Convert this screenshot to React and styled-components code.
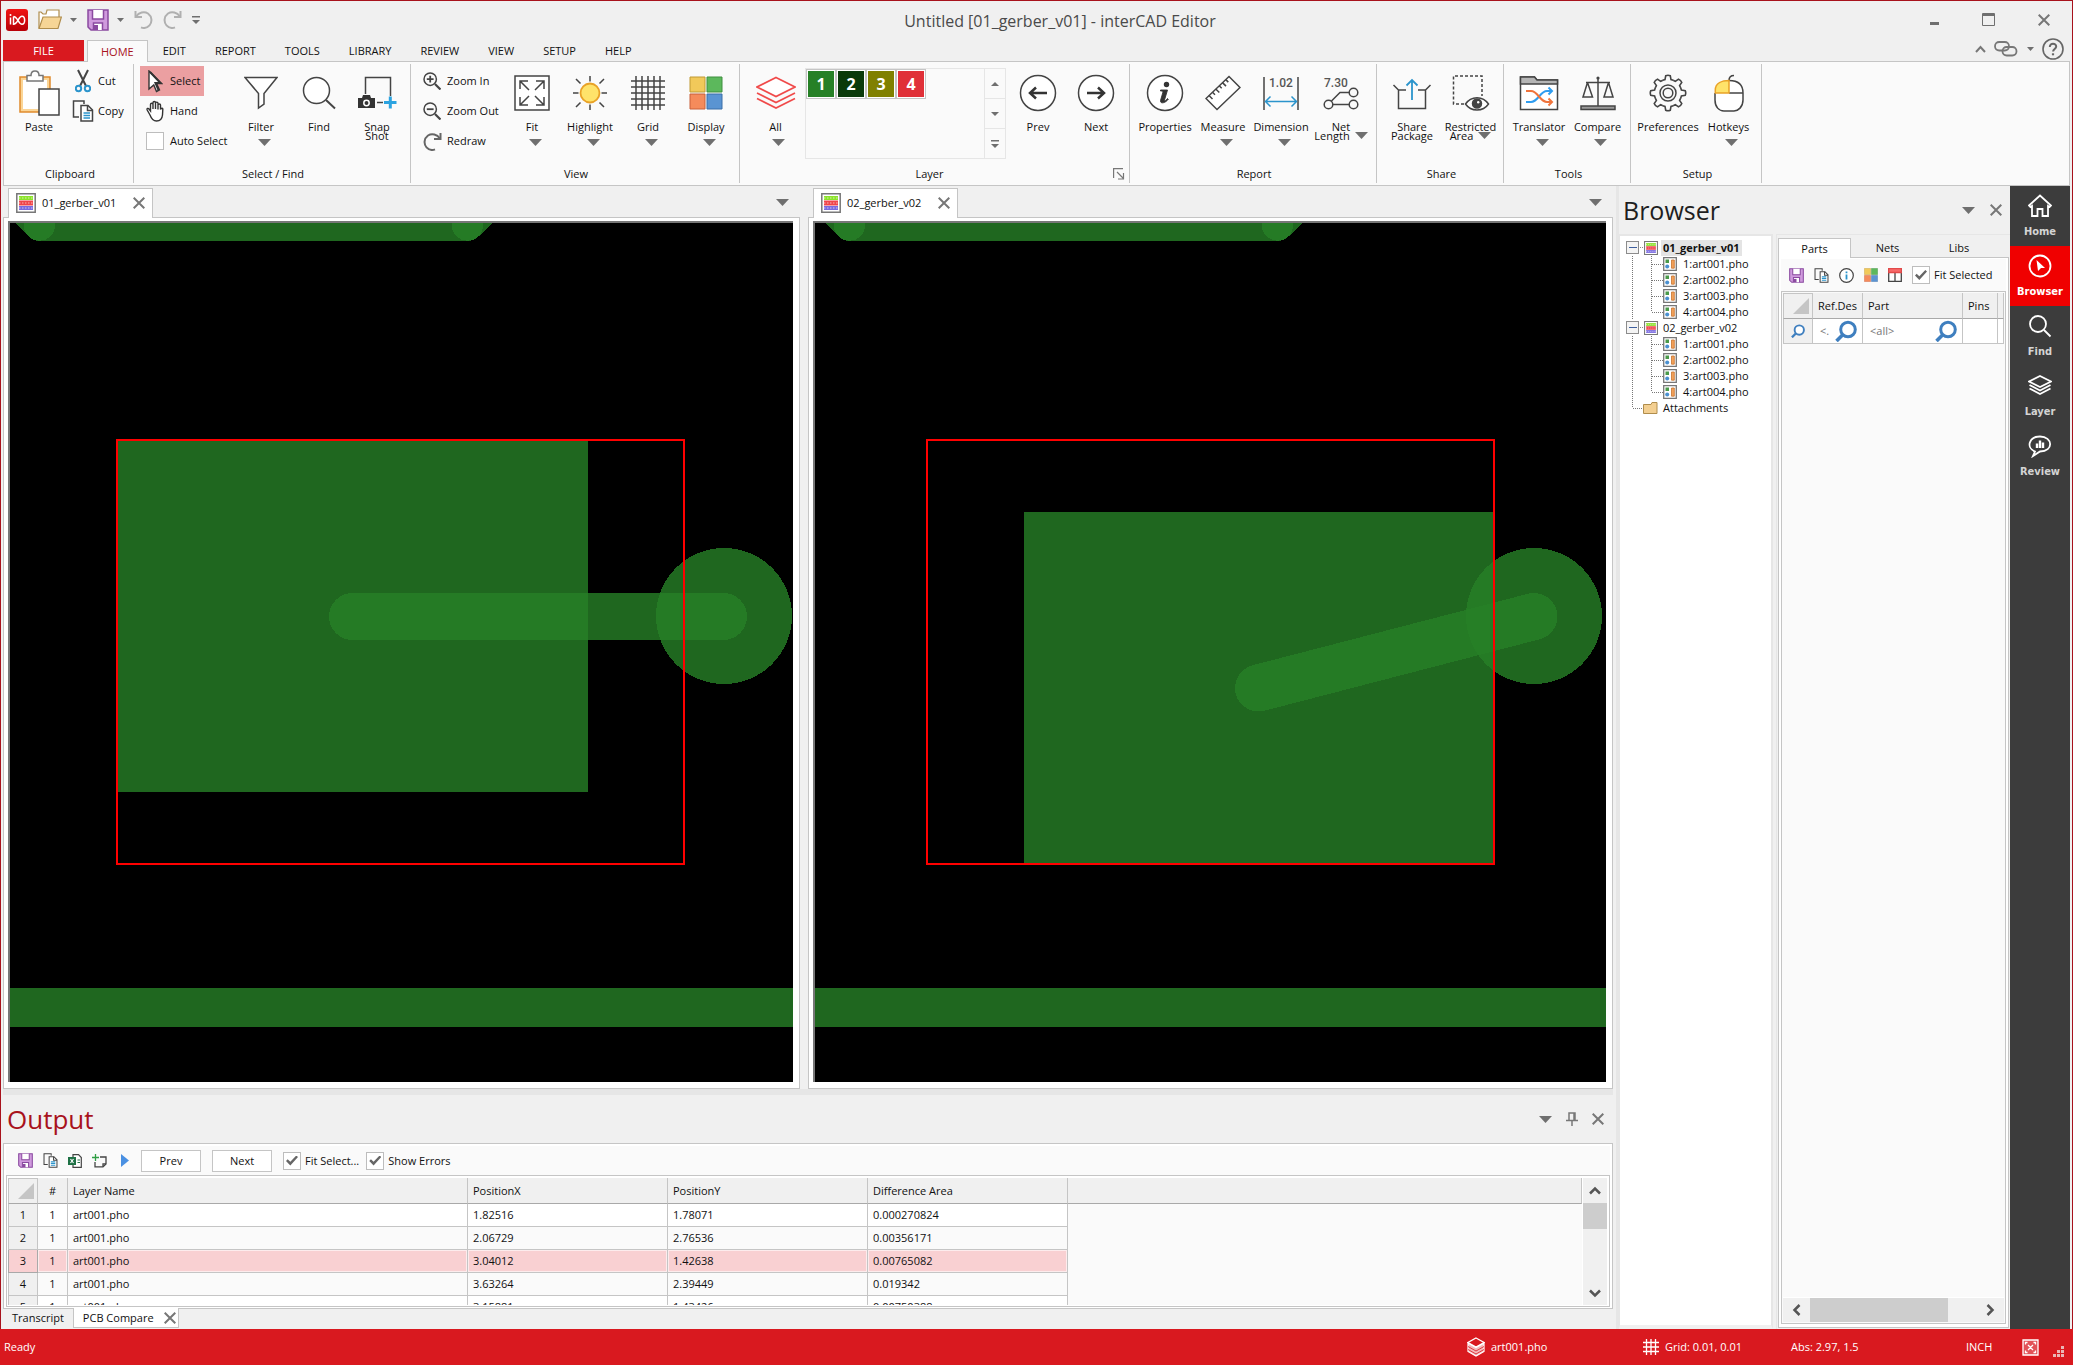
import React, { useState } from 'react';
import styled, { createGlobalStyle, css } from 'styled-components';

const GlobalStyle = createGlobalStyle`
  * {
    box-sizing: border-box;
  }
  html, body, #root {
    height: 100%;
    margin: 0;
  }
  body {
    overflow: hidden;
  }
  body, button, input, table {
    font-family: 'Open Sans', 'Noto Sans', sans-serif;
    font-size: 11px;
    line-height: 16px;
    color: #111;
  }
  button {
    padding: 0;
    border: 0;
    background: none;
    cursor: default;
  }
  svg {
    display: block;
    flex: none;
  }
`;

const line = '#c5c5c5';
const softLine = '#e6e6e6';
const ink = '#444';
const grey = '#777';
const red = '#d9191f';
const darkRed = '#a8121c';

const Window = styled.div`
  display: flex;
  flex-direction: column;
  height: 100vh;
  background: #f0f0f0;
  border-top: 1px solid ${darkRed};
`;

const Frame = styled.div`
  flex: 1;
  min-height: 0;
  display: flex;
  flex-direction: column;
  padding: 0 2px;
  border: solid ${darkRed};
  border-width: 0 1px;
`;

/* ---------- icons ---------- */

const Icon = ({ w = 16, h = w, children, ...rest }) => (
  <svg width={w} height={h} viewBox={`0 0 ${w} ${h}`} fill="none" stroke={ink} strokeWidth="1.5" aria-hidden="true" {...rest}>
    {children}
  </svg>
);

const Arrow = ({ w = 13, h = 7 }) => (
  <Icon w={w} h={h} stroke="none">
    <path d={`M0 0H${w}L${w / 2} ${h}Z`} fill="#6f6f6f" />
  </Icon>
);

const Cross = ({ size = 11, color = grey }) => (
  <Icon w={size} stroke={color} strokeWidth="2">
    <path d={`M.7 .7L${size - 0.7} ${size - 0.7}M${size - 0.7} .7L.7 ${size - 0.7}`} />
  </Icon>
);

const LogoIcon = () => (
  <Icon w={22} stroke="#fff" strokeWidth="1.5">
    <defs>
      <linearGradient id="logo" x1="0" y1="0" x2="0" y2="1">
        <stop offset="0" stopColor="#f01414" />
        <stop offset="1" stopColor="#b80008" />
      </linearGradient>
    </defs>
    <rect width="22" height="22" rx="3" fill="url(#logo)" stroke="none" />
    <path d="M4.500 8.500V15.500" />
    <path d="M7.500 7.500V15.300C11.500 15.300 12.500 7.300 16 7.300C19.500 7.300 19.500 15.300 16 15.300C12.500 15.300 11.500 7.500 7.500 7.500" />
    <circle cx="4.500" cy="6" r="1" fill="#fff" stroke="none" />
  </Icon>
);

const FolderIcon = () => (
  <Icon w={24} h={21} stroke="#b08d4c" strokeWidth="1.2">
    <path d="M1 19V3H3L5 5H8L9 1H21V8" fill="#fff" />
    <path d="M1 19.5L5 8H23.4L20 19.5Z" fill="#f6d596" />
  </Icon>
);

const SaveIcon = ({ size = 22 }) => (
  <svg width={size} height={size} viewBox="0 0 22 22" fill="none" stroke="#8a4aa0" strokeWidth="1.5" aria-hidden="true">
    <path d="M1 1H21V21H4L1 18Z" fill="#cf9add" />
    <path d="M5.5 1V10H16.5V1M6.5 21V14H15.5V21" fill="#fff" />
    <path d="M7 16H11V21H7Z" fill="#8a4aa0" stroke="none" />
  </svg>
);

const UndoIcon = ({ flip, color = '#b0b0b0' }) => (
  <Icon w={19} stroke={color} strokeWidth="2">
    <g transform={flip ? 'matrix(-1 0 0 1 19 0)' : undefined}>
      <path d="M1.5 1V7H8" />
      <path d="M2 6.5C5 2.5 10 1 14 3.5C18 6.5 18.5 12 15.5 15.3C13 18 9.500 18.400 7 17.300" />
    </g>
  </Icon>
);

const CustomizeIcon = () => (
  <Icon w={8} h={8} stroke="none" fill="#6f6f6f">
    <path d="M0 0H8V1.400H0ZM0 4H8L4 8Z" />
  </Icon>
);

const PasteIcon = () => (
  <Icon w={42} h={46}>
    <path d="M2 7H32V42H2Z" fill="#fbd596" stroke="#e08a2c" />
    <path d="M5 10H29V39H5Z" fill="#fff" stroke="none" />
    <path d="M9 11V5.500H13C13 -.5 21 -.5 21 5.500H25V11Z" fill="#fff" stroke="#777" />
    <path d="M21 19H41V45H21Z" fill="#fff" />
  </Icon>
);

const CutIcon = () => (
  <Icon w={16} h={24}>
    <path d="M3 1L11 17M13 1L5 17" strokeWidth="2" />
    <circle cx="3.500" cy="19.500" r="2.700" stroke="#2b94cc" strokeWidth="2" />
    <circle cx="12.500" cy="19.500" r="2.700" stroke="#2b94cc" strokeWidth="2" />
  </Icon>
);

const CopyIcon = ({ size = 22 }) => (
  <svg width={size} height={size} viewBox="0 0 22 22" fill="none" stroke={ink} strokeWidth="1.5" aria-hidden="true">
    <path d="M7 17H1.500V1H12V4" />
    <path d="M9 5.500H16L20.500 10V21H9Z" fill="#fff" />
    <path d="M15.500 5.500V10.500H20.500" />
    <path d="M11.500 13H18M11.500 15.500H18M11.500 18H18" stroke="#2b94cc" />
  </svg>
);

const CursorIcon = () => (
  <Icon w={16} h={23} strokeWidth="1.400" stroke="#333">
    <path d="M2 1L14.500 13.500H9.500L12.500 20L9.500 21.500L6.800 15L2 19Z" fill="#fff" />
    <path d="M3 2L13.500 13H8.500L11.500 20" strokeWidth="2" />
  </Icon>
);

const HandIcon = () => (
  <Icon w={18} h={22} strokeWidth="1.400" stroke="#333">
    <path d="M4 15L1.200 10C.6 8.500 2.200 7.800 3 9L4.500 11V4.500C4.500 2.800 7 2.800 7 4.500V9V2.700C7 1 9.500 1 9.500 2.700V9V3.300C9.500 1.700 12 1.700 12 3.300V9.500V5C12.200 3.700 14.500 3.700 14.500 5V9.500C15.500 7.500 17 8 16.800 9.500L16.500 15C16 20 13 21 10.500 21C7 21 5.500 19 4 15Z" fill="#fff" />
  </Icon>
);

const FilterIcon = () => (
  <Icon w={34} h={34}>
    <path d="M1 1.500H33L20 17.500V28L14.500 32V17.500Z" fill="#fff" />
  </Icon>
);

const FindIcon = () => (
  <Icon w={34} h={34}>
    <circle cx="14.500" cy="14.500" r="13" fill="#fff" />
    <path d="M24 24L33 32.500" strokeWidth="2" />
  </Icon>
);

const SnapIcon = () => (
  <Icon w={40} h={34}>
    <path d="M8.500 18V1.500H33.500V20" />
    <path d="M1 22H5L6 19H13L14 22H18V32H1Z" fill="#333" stroke="none" />
    <circle cx="9.500" cy="27" r="2.700" fill="#333" stroke="#fff" />
    <path d="M20 26.500H26" />
    <path d="M27 26.500H39.500M33.300 20.500V32.500" stroke="#2ba3e0" strokeWidth="3" />
  </Icon>
);

const ZoomIcon = ({ plus }) => (
  <Icon w={18}>
    <circle cx="7.200" cy="7.200" r="6.200" />
    <path d="M12 12L17.500 17.500" strokeWidth="2.200" />
    <path d={plus ? 'M3.800 7.200H10.600M7.200 3.800V10.600' : 'M3.800 7.200H10.600'} strokeWidth="1.800" />
  </Icon>
);

const FitIcon = () => (
  <Icon w={36}>
    <path d="M1 1H35V35H1Z" fill="#fff" />
    <path d="M6 14V6H14M6 6L15 15M30 14V6H22M30 6L21 15M6 22V30H14M6 30L15 21M30 22V30H22M30 30L21 21" />
  </Icon>
);

const SunIcon = () => (
  <Icon w={36}>
    <path d="M18 1V6.500M18 29.500V35M1 18H6.500M29.500 18H35M4 4L8.500 8.500M27.500 27.500L32 32M32 4L27.500 8.500M8.500 27.500L4 32" />
    <circle cx="18" cy="18" r="9.500" fill="#ffe36a" stroke="#e9a227" strokeWidth="1.800" />
  </Icon>
);

const GridIcon = () => (
  <Icon w={36}>
    <path d="M6 1V35M12 1V35M18 1V35M24 1V35M30 1V35M1 6H35M1 12H35M1 18H35M1 24H35M1 30H35" />
  </Icon>
);

const TilesIcon = ({ size = 34 }) => (
  <svg width={size} height={size} viewBox="0 0 34 34" strokeWidth="1" aria-hidden="true">
    <path d="M1 1H16V16H1Z" fill="#f1c95a" stroke="#c09a35" />
    <path d="M18 1H33V16H18Z" fill="#5cb85c" stroke="#3f8f3f" />
    <path d="M1 18H16V33H1Z" fill="#f58b5b" stroke="#c8603a" />
    <path d="M18 18H33V33H18Z" fill="#5a94d2" stroke="#3a6fa8" />
  </svg>
);

const LayersRedIcon = () => (
  <Icon w={40} h={34} stroke="#f04a4a" strokeWidth="1.700">
    <path d="M20 1.500L39 11L20 20.500L1 11Z" fill="#fff" />
    <path d="M1 17L20 26.500L39 17M1 22.500L20 32L39 22.500" />
  </Icon>
);

const RoundArrowIcon = ({ flip }) => (
  <Icon w={38}>
    <circle cx="19" cy="19" r="17.500" fill="#fff" />
    <path d={flip ? 'M10 19H27M21 13.500L27 19L21 24.500' : 'M28 19H11M17 13.500L11 19L17 24.500'} strokeWidth="2.500" stroke="#333" />
  </Icon>
);

const InfoBigIcon = () => (
  <Icon w={38}>
    <circle cx="19" cy="19" r="17.500" fill="#fff" />
    <circle cx="20.500" cy="10.500" r="2.700" fill="#333" stroke="none" />
    <path d="M14.500 16H21.500L18.500 26C18.300 27.500 19.500 27 21.500 24.500L22.300 25.300C19 29.500 14 30 14.500 26.500L17 18C17 17 16 17 14.500 17Z" fill="#333" stroke="#333" strokeWidth=".9" />
  </Icon>
);

const RulerIcon = () => (
  <Icon w={36}>
    <path d="M24 1.500L35 12.500L12 34.500L1 23.500Z" fill="#fff" />
    <path d="M4 20.500L7.500 24M7.500 17.200L10 19.700M10.800 14L14.300 17.500M14.200 10.800L16.700 13.300M17.500 7.600L21 11.100M20.800 4.600L23.300 7.100" />
  </Icon>
);

const IconText = styled.text`
  font: 500 12px Roboto, 'Open Sans', sans-serif;
  fill: #555;
  stroke: none;
`;

const DimensionIcon = () => (
  <Icon w={36}>
    <path d="M1 2V35M35 2V35" />
    <IconText x="6" y="12">1.02</IconText>
    <path d="M2.500 26.500H33.500M7.500 21.500L2.500 26.500L7.500 31.500M28.500 21.500L33.500 26.500L28.500 31.500" stroke="#2b94cc" />
  </Icon>
);

const NetIcon = () => (
  <Icon w={38} h={36}>
    <IconText x="2" y="12">7.30</IconText>
    <circle cx="6.500" cy="29.500" r="4.300" />
    <circle cx="31.500" cy="29.500" r="4.300" />
    <circle cx="31.500" cy="17.500" r="4.300" />
    <path d="M11 29.500H27M9.500 26L18 17.500H27" />
  </Icon>
);

const ShareIcon = () => (
  <Icon w={40} h={36}>
    <path d="M1.500 10L6.500 15H14M38.500 10L33.500 15H26M6.500 15V33.500H33.500V15" />
    <path d="M20 25V5M14.500 10.500L20 5L25.500 10.500" stroke="#2b94cc" strokeWidth="1.800" />
  </Icon>
);

const RestrictedIcon = () => (
  <Icon w={38} h={38}>
    <path d="M12 30H1.500V2H30V22" strokeDasharray="3 2" />
    <path d="M13.500 30C19 21.500 31 21.500 36.500 30C31 38 19 38 13.500 30Z" fill="#fff" />
    <circle cx="25" cy="29.500" r="4.500" fill="#444" />
    <circle cx="26.200" cy="28.200" r="1.200" fill="#fff" stroke="none" />
  </Icon>
);

const TranslatorIcon = () => (
  <Icon w={40} h={36}>
    <path d="M1.500 34.500V2H15.500L18 5H38.500V34.500Z" fill="#fff" />
    <path d="M1.500 2H15.500L18 5H38.500V9H1.500Z" fill="#b5b5b5" />
    <path d="M7 27H12C19 27 21 16 28 16H33M29.500 12.500L33 16L29.500 19.500" stroke="#2f9df0" strokeWidth="2" />
    <path d="M7 16H12C19 16 21 27 28 27H33M29.500 23.500L33 27L29.500 30.500" stroke="#f0743c" strokeWidth="2" />
  </Icon>
);

const ScaleIcon = () => (
  <Icon w={36}>
    <path d="M1 31H35V34.500H1Z" fill="#999" />
    <path d="M18 4V31M6 7.500H30" />
    <circle cx="18" cy="3" r="1.600" fill={ink} stroke="none" />
    <path d="M7.500 7.500L3 22H12.500L7.500 7.500M28.500 7.500L24 22H33L28.500 7.500" />
  </Icon>
);

const teeth = Array.from({ length: 8 }, (_, i) => i * 45);

const GearIcon = () => (
  <Icon w={38}>
    <g strokeWidth="1.600">
      {teeth.map((deg) => (
        <path key={deg} transform={`rotate(${deg} 19 19)`} d="M13.700 6.300L16 5.600L16.700 1.800C18 1.200 20 1.200 21.300 1.800L22 5.600L24.300 6.300" />
      ))}
    </g>
    <circle cx="19" cy="19" r="8" />
    <circle cx="19" cy="19" r="4.800" />
  </Icon>
);

const MouseIcon = () => (
  <Icon w={30} h={38}>
    <path d="M15 6.500C22 6.500 29 9 29 19V26C29 33 24 37 20 37H10C5 37 1 33 1 26V19" fill="#fff" />
    <path d="M15 19H29M15 6.500C15 3 17 1.500 20 1.500" />
    <path d="M1.300 19V16C1.300 9 8 6.500 15 6.500V19Z" fill="#ffe36a" stroke="#e9a227" />
  </Icon>
);

const LinkIcon = () => (
  <Icon w={24} h={16} stroke={grey} strokeWidth="1.800">
    <rect x="1" y="1" width="14" height="8.500" rx="4.200" />
    <rect x="8.500" y="6" width="14" height="8.500" rx="4.200" />
  </Icon>
);

const HelpIcon = () => (
  <Icon w={22} stroke="#666" strokeWidth="1.600">
    <circle cx="11" cy="11" r="10" />
    <path d="M7.800 9C7.800 4.500 14.300 5 14.200 8.700C14 11 11.100 11 11.100 13.500" strokeWidth="2" />
    <path d="M11 15.300V17.300" strokeWidth="2.200" />
  </Icon>
);

const BoardIcon = ({ size = 20 }) => (
  <svg width={size} height={size} viewBox="0 0 20 20" aria-hidden="true">
    <path d="M.8 .8H19.200V19.200H.8Z" fill="#fff" stroke="#777" strokeWidth="1.500" />
    <path d="M3 3H17V7H3Z" fill="#8be32a" />
    <path d="M3 7.500H17V12.500H3Z" fill="#f0454b" />
    <path d="M3 13H17V17H3Z" fill="#7a6ae0" />
    <path d="M3 5H17M3 10H17M3 15H17" stroke="#fff" strokeOpacity=".6" strokeWidth="1.200" strokeDasharray="1.500 1.500" />
  </svg>
);

const ArtIcon = () => (
  <Icon w={14} strokeWidth="1.300" stroke="#777">
    <path d="M.7 .7H13.300V13.300H.7Z" fill="#fff" />
    <path d="M2.500 2.500H6V6H2.500Z" fill="#4a9a4a" stroke="none" />
    <circle cx="4.200" cy="9.500" r="2" fill="#4a90d0" stroke="none" />
    <path d="M8.500 3H11.300V11.200H8.500Z" fill="#f2a15a" stroke="#c8742e" strokeWidth=".8" />
  </Icon>
);

const SmallFolderIcon = () => (
  <Icon w={15} h={12} stroke="#b08d4c" strokeWidth="1">
    <path d="M.5 11.500V2.500H8L9 .5H14V11.500Z" fill="#f3cf91" />
  </Icon>
);

const ExcelIcon = () => (
  <Icon w={14} strokeWidth="1.200">
    <path d="M5 3V.7H10.500L13.300 3.500V13.300H5V11" fill="#fff" />
    <path d="M0 3H8V11H0Z" fill="#1e7145" stroke="none" />
    <path d="M2.500 5L5.500 9M5.500 5L2.500 9" stroke="#fff" />
    <path d="M9.500 6H12M9.500 8.500H12" stroke="#1e7145" />
  </Icon>
);

const AddNoteIcon = () => (
  <Icon w={15} h={14} strokeWidth="1.300">
    <path d="M8 3H14V10L11 12.800H3V8" />
    <path d="M11 12.500V9.800H14" />
    <path d="M0 3.500H7M3.500 0V7" stroke="#2f9e44" />
  </Icon>
);

const PlayIcon = () => (
  <Icon w={14} h={13} stroke="none">
    <path d="M4 0L12 6.500L4 13Z" fill="#4a90e2" />
  </Icon>
);

const InfoIcon = () => (
  <Icon w={15} strokeWidth="1.200">
    <circle cx="7.500" cy="7.500" r="6.800" fill="#fff" />
    <path d="M7.500 6.500V11.500M7.500 3.500V5.200" stroke="#2b94cc" strokeWidth="1.800" />
  </Icon>
);

const TableIcon = () => (
  <Icon w={14} strokeWidth="1.300">
    <path d="M.7 1H13.300V13.300H.7ZM7 5V13.300" fill="#fff" />
    <path d="M.7 .7H13.300V4.500H.7Z" fill="#f86b6b" stroke="#e24a4a" />
  </Icon>
);

const SearchBlueIcon = ({ size = 22 }) => (
  <svg width={size} height={size} viewBox="0 0 22 22" fill="none" stroke="#3f7fbf" strokeWidth="3" aria-hidden="true">
    <circle cx="13" cy="9.500" r="7.300" fill="#fff" />
    <path d="M7.500 15L1.500 21" strokeWidth="3.600" />
  </svg>
);

const PinIcon = () => (
  <Icon w={12} h={14} stroke={grey}>
    <path d="M3 8V1H9V8M0 8.500H12M6 9V14M8 1V8" />
  </Icon>
);

const Chevron = ({ dir }) => (
  <Icon w={12} stroke="#555" strokeWidth="2.500">
    <path transform={`rotate(${dir} 6 6)`} d="M1 8.500L6 3.500L11 8.500" />
  </Icon>
);

const Corner = () => (
  <Icon w={16} stroke="none">
    <path d="M16 0V16H0Z" fill={line} />
  </Icon>
);

/* ---------- title bar and tabs ---------- */

const TitleBar = styled.header`
  display: flex;
  align-items: center;
  height: 39px;
  padding: 0 20px 2px 3px;
  flex: none;
`;

const QuickBar = styled.div`
  display: flex;
  align-items: center;
  gap: 10px;
`;

const IconButton = styled.button`
  display: flex;
  align-items: center;
  gap: ${({ $gap }) => $gap || 0}px;
`;

const WindowTitle = styled.h1`
  flex: 1;
  margin: 0;
  padding: 2px 10px 0 0;
  text-align: center;
  font-size: 16px;
  line-height: 24px;
  font-weight: 400;
  color: #4a4a4a;
`;

const WindowButtons = styled.div`
  display: flex;
  align-items: center;
  gap: 43px;
`;

const MenuBar = styled.nav`
  display: flex;
  align-items: flex-end;
  height: 21px;
  flex: none;
`;

const FileButton = styled.button`
  width: 81px;
  height: 21px;
  color: #fff;
  background: ${red};
`;

const MenuTab = styled.button`
  height: 21px;
  padding: 0 13px 0 14px;
  border: 1px solid transparent;
  border-bottom: 0;
  ${({ $active }) =>
    $active &&
    css`
      height: 22px;
      margin: 0 0 -1px 3px;
      padding: 0 13px;
      z-index: 1;
      color: ${darkRed};
      background: #fafafa;
      border-color: ${line};
    `}
`;

const MenuRight = styled.div`
  display: flex;
  align-items: center;
  height: 24px;
  gap: 8px;
  margin-left: auto;
  padding-right: 6px;
`;

/* ---------- ribbon ---------- */

const Ribbon = styled.section`
  display: flex;
  flex: none;
  height: 125px;
  padding: 2px 0;
  background: #fafafa;
  border: 1px solid ${line};
`;

const Group = styled.div`
  display: flex;
  flex-direction: column;
  padding: 2px ${({ $right = 3 }) => $right}px 0 6px;
  border-right: 1px solid ${line};
`;

const GroupBody = styled.div`
  flex: 1;
  display: flex;
  align-items: flex-start;
`;

const GroupLabel = styled.div`
  display: flex;
  align-items: center;
  height: 18px;
  span {
    flex: 1;
    text-align: center;
  }
`;

const SmallColumn = styled.div`
  display: flex;
  flex-direction: column;
  align-items: flex-start;
  width: ${({ $width }) => $width}px;
`;

const smallItem = css`
  display: flex;
  align-items: center;
  height: 30px;
  gap: 3px;
  padding: 0 4px 0 3px;
  white-space: nowrap;
`;

const SmallButton = styled.button`
  ${smallItem}
  background: ${({ $active }) => ($active ? '#eb9fa1' : 'none')};
`;

const SmallCheck = styled.label`
  ${smallItem}
`;

const SmallIconBox = styled.span`
  display: flex;
  align-items: center;
  justify-content: center;
  width: 24px;
`;

const BigButton = styled.button`
  display: flex;
  flex-direction: column;
  align-items: center;
  width: ${({ $width = 58 }) => $width}px;
  padding-top: 3px;
`;

const BigIconBox = styled.span`
  display: flex;
  align-items: center;
  justify-content: center;
  height: 48px;
  margin-bottom: 5px;
`;

const BigLabel = styled.span`
  display: flex;
  align-items: center;
  gap: 5px;
  line-height: 9px;
  white-space: nowrap;
`;

const BigArrow = styled.span`
  padding: 8px 0 0 6px;
`;

const Gallery = styled.div`
  display: flex;
  width: 201px;
  height: 91px;
  margin: 2px 3px 0 0;
  border: 1px solid ${softLine};
`;

const Swatches = styled.div`
  display: flex;
  align-items: flex-start;
  flex: 1;
`;

const Swatch = styled.button`
  width: 30px;
  height: 30px;
  border: 1px solid ${line};
  box-shadow: inset 0 0 0 1px #fff;
  background: ${({ $color }) => $color};
  color: #fff;
  font-size: 16px;
  font-weight: 700;
`;

const GalleryScroll = styled.div`
  display: flex;
  flex-direction: column;
  width: 21px;
  border-left: 1px solid ${softLine};
  button {
    flex: 1;
    display: flex;
    align-items: center;
    justify-content: center;
  }
  button + button {
    border-top: 1px solid ${softLine};
  }
`;

const Checkbox = styled.input.attrs({ type: 'checkbox' })`
  appearance: none;
  display: grid;
  place-items: center;
  width: 18px;
  height: 18px;
  margin: 0;
  background: #fff;
  border: 1px solid #bdbdbd;
  &:checked::after {
    content: '';
    width: 12px;
    height: 10px;
    background: #666;
    clip-path: polygon(0 55%, 14% 38%, 36% 62%, 86% 0, 100% 16%, 36% 100%);
  }
`;

const Big = ({ icon, label, second, arrow, width }) => (
  <BigButton $width={width}>
    <BigIconBox>{icon}</BigIconBox>
    <BigLabel>{label}</BigLabel>
    {second && (
      <BigLabel>
        {second}
        {arrow && <Arrow />}
      </BigLabel>
    )}
    {arrow && !second && (
      <BigArrow>
        <Arrow />
      </BigArrow>
    )}
  </BigButton>
);

const Small = ({ icon, label, active }) => (
  <SmallButton $active={active}>
    <SmallIconBox>{icon}</SmallIconBox>
    {label}
  </SmallButton>
);

const layers = [
  { id: 1, color: '#268026' },
  { id: 2, color: '#0a3a0a' },
  { id: 3, color: '#808000' },
  { id: 4, color: '#e03038' },
];

const LayerGallery = () => (
  <Gallery>
    <Swatches>
      {layers.map(({ id, color }) => (
        <Swatch key={id} $color={color}>
          {id}
        </Swatch>
      ))}
    </Swatches>
    <GalleryScroll>
      <button aria-label="Scroll up">
        <Icon w={8} h={4} stroke="none">
          <path d="M0 4H8L4 0Z" fill="#6f6f6f" />
        </Icon>
      </button>
      <button aria-label="Scroll down">
        <Arrow w={8} h={4} />
      </button>
      <button aria-label="More layers">
        <CustomizeIcon />
      </button>
    </GalleryScroll>
  </Gallery>
);

const RibbonBar = () => (
  <Ribbon>
    <Group>
      <GroupBody>
        <Big icon={<PasteIcon />} label="Paste" />
        <SmallColumn $width={62}>
          <Small icon={<CutIcon />} label="Cut" />
          <Small icon={<CopyIcon />} label="Copy" />
        </SmallColumn>
      </GroupBody>
      <GroupLabel>
        <span>Clipboard</span>
      </GroupLabel>
    </Group>
    <Group $right={4}>
      <GroupBody>
        <SmallColumn $width={92}>
          <Small icon={<CursorIcon />} label="Select" active />
          <Small icon={<HandIcon />} label="Hand" />
          <SmallCheck>
            <SmallIconBox>
              <Checkbox />
            </SmallIconBox>
            Auto Select
          </SmallCheck>
        </SmallColumn>
        <Big icon={<FilterIcon />} label="Filter" arrow />
        <Big icon={<FindIcon />} label="Find" />
        <Big icon={<SnapIcon />} label="Snap" second="Shot" />
      </GroupBody>
      <GroupLabel>
        <span>Select / Find</span>
      </GroupLabel>
    </Group>
    <Group $right={4}>
      <GroupBody>
        <SmallColumn $width={86}>
          <Small icon={<ZoomIcon plus />} label="Zoom In" />
          <Small icon={<ZoomIcon />} label="Zoom Out" />
          <Small icon={<UndoIcon flip color="#666" />} label="Redraw" />
        </SmallColumn>
        <Big icon={<FitIcon />} label="Fit" arrow />
        <Big icon={<SunIcon />} label="Highlight" arrow />
        <Big icon={<GridIcon />} label="Grid" arrow />
        <Big icon={<TilesIcon />} label="Display" arrow />
      </GroupBody>
      <GroupLabel>
        <span>View</span>
      </GroupLabel>
    </Group>
    <Group $right={4}>
      <GroupBody>
        <Big icon={<LayersRedIcon />} label="All" arrow width={59} />
        <LayerGallery />
        <Big icon={<RoundArrowIcon />} label="Prev" />
        <Big icon={<RoundArrowIcon flip />} label="Next" />
      </GroupBody>
      <GroupLabel>
        <span>Layer</span>
        <IconButton aria-label="Layer options">
          <Icon w={12} stroke={grey} strokeWidth="1.200">
            <path d="M.6 10V.6H10M4 4L10.500 10.500M10.500 5V11H5" />
          </Icon>
        </IconButton>
      </GroupLabel>
    </Group>
    <Group $right={4}>
      <GroupBody>
        <Big icon={<InfoBigIcon />} label="Properties" />
        <Big icon={<RulerIcon />} label="Measure" arrow />
        <Big icon={<DimensionIcon />} label="Dimension" arrow />
        <Big icon={<NetIcon />} label="Net" second="Length" arrow width={62} />
      </GroupBody>
      <GroupLabel>
        <span>Report</span>
      </GroupLabel>
    </Group>
    <Group>
      <GroupBody>
        <Big icon={<ShareIcon />} label="Share" second="Package" />
        <Big icon={<RestrictedIcon />} label="Restricted" second="Area" arrow width={59} />
      </GroupBody>
      <GroupLabel>
        <span>Share</span>
      </GroupLabel>
    </Group>
    <Group>
      <GroupBody>
        <Big icon={<TranslatorIcon />} label="Translator" arrow />
        <Big icon={<ScaleIcon />} label="Compare" arrow width={59} />
      </GroupBody>
      <GroupLabel>
        <span>Tools</span>
      </GroupLabel>
    </Group>
    <Group>
      <GroupBody>
        <Big icon={<GearIcon />} label="Preferences" width={62} />
        <Big icon={<MouseIcon />} label="Hotkeys" arrow width={59} />
      </GroupBody>
      <GroupLabel>
        <span>Setup</span>
      </GroupLabel>
    </Group>
  </Ribbon>
);

/* ---------- documents ---------- */

const Main = styled.main`
  flex: 1;
  min-height: 0;
  display: flex;
`;

const LeftColumn = styled.div`
  flex: 1;
  min-width: 0;
  display: flex;
  flex-direction: column;
`;

const Documents = styled.div`
  flex: 1;
  min-height: 0;
  display: flex;
  gap: 8px;
`;

const Document = styled.section`
  flex: ${({ $share }) => $share} 1 0;
  min-width: 0;
  display: flex;
  flex-direction: column;
`;

const DocTabs = styled.div`
  display: flex;
  align-items: center;
  justify-content: space-between;
  height: 31px;
  padding: 2px 11px 0 5px;
`;

const DocTab = styled.div`
  display: flex;
  align-items: center;
  align-self: flex-start;
  gap: 6px;
  height: 30px;
  width: 145px;
  padding: 0 7px 1px;
  background: #fff;
  border: 1px solid ${line};
  border-bottom: 0;
  z-index: 1;
  button {
    margin-left: auto;
  }
`;

const DocFrame = styled.div`
  flex: 1;
  min-height: 0;
  padding: 3px 6px 6px 4px;
  background: #fff;
  border: 1px solid ${line};
`;

const Canvas = styled.div`
  height: 100%;
  overflow: hidden;
  background: #000;
  border: solid #777;
  border-width: 2px 0 0 2px;
`;

const copper = { fill: '#268026', fillOpacity: 0.806, stroke: 'none' };

const Artwork = ({ shift = 0, pad, trace }) => (
  <svg width="100%" height="100%" shapeRendering="crispEdges" fill="none">
    <g transform={`translate(${shift} 0)`}>
      <path {...copper} d="M6 0L18 13A16 16 0 0 0 29.500 18H457.500A16 16 0 0 0 469 13L482 0Z" />
      <circle {...copper} cx="29.500" cy="2" r="15.700" />
      <circle {...copper} cx="457.500" cy="2" r="15.700" />
      <rect {...copper} x={pad.x} y={pad.y} width="471" height="352" />
      <circle {...copper} cx="714" cy="393" r="68" />
      <path d={trace} stroke="#268026" strokeOpacity="0.806" strokeWidth="47" strokeLinecap="round" />
      <rect x="107" y="217" width="567" height="424" stroke="#f00" strokeWidth="2" />
    </g>
    <rect {...copper} x="0" y="765" width="100%" height="39" />
  </svg>
);

const DocumentPane = ({ name, share, ...art }) => (
  <Document $share={share}>
    <DocTabs>
      <DocTab>
        <BoardIcon />
        <span>{name}</span>
        <IconButton aria-label={`Close ${name}`}>
          <Cross size={12} />
        </IconButton>
      </DocTab>
      <IconButton aria-label="Open documents">
        <Arrow />
      </IconButton>
    </DocTabs>
    <DocFrame>
      <Canvas>
        <Artwork {...art} />
      </Canvas>
    </DocFrame>
  </Document>
);

/* ---------- output ---------- */

const Splitter = styled.div`
  height: 6px;
  flex: none;
  background: ${softLine};
`;

const Output = styled.section`
  display: flex;
  flex-direction: column;
  flex: none;
  height: 234px;
`;

const PanelHeader = styled.div`
  display: flex;
  align-items: center;
  gap: ${({ $gap }) => $gap}px;
  flex: none;
  height: 48px;
  padding: 0 ${({ $right }) => $right}px 0 4px;
`;

const PanelTitle = styled.h2`
  flex: 1;
  margin: 0;
  font-size: ${({ $size = 26 }) => $size}px;
  line-height: 36px;
  font-weight: 400;
  color: ${({ $color = '#1e1e1e' }) => $color};
`;

const OutputBody = styled.div`
  flex: 1;
  min-height: 0;
  display: flex;
  flex-direction: column;
  padding: 2px 2px 1px;
  background: #fff;
  border: 1px solid ${line};
`;

const Toolbar = styled.div`
  display: flex;
  align-items: center;
  flex: none;
  height: ${({ $height = 29 }) => $height}px;
  gap: 10px;
  padding-left: ${({ $left = 12 }) => $left}px;
  background: #fafafa;
`;

const PlainButton = styled.button`
  width: 60px;
  height: 22px;
  background: #fff;
  border: 1px solid ${line};
`;

const CheckLabel = styled.label`
  display: flex;
  align-items: center;
  gap: 4px;
  white-space: nowrap;
`;

const ToolGroup = styled.div`
  display: flex;
  align-items: center;
  gap: ${({ $gap }) => $gap}px;
`;

const TableBox = styled.div`
  flex: 1;
  min-height: 0;
  display: flex;
  padding: 2px 2px 1px 1px;
  background: #fff;
  border: 1px solid ${line};
`;

const TableView = styled.div`
  flex: 1;
  min-width: 0;
  overflow: hidden;
  background: #fafafa;
`;

const Table = styled.table`
  width: 100%;
  table-layout: fixed;
  border-collapse: separate;
  border-spacing: 0;
  th,
  td {
    height: 23px;
    padding: 0 5px;
    font-weight: 400;
    text-align: left;
    white-space: nowrap;
    border: solid ${line};
    border-width: 0 1px 1px 0;
  }
  thead th {
    height: 26px;
    background: #f0f0f0;
    border-bottom-color: #a9a9a9;
  }
  tbody th,
  td:nth-child(2),
  thead th:nth-child(2) {
    text-align: center;
  }
  thead th:first-child {
    padding: 0 4px 0 9px;
    border-left: 1px solid ${line};
    border-top: 1px solid ${line};
  }
  tbody th {
    background: #f0f0f0;
    border-left: 1px solid ${line};
  }
`;

const Row = styled.tr`
  td {
    background: ${({ $odd }) => ($odd ? '#fff' : '#fafafa')};
  }
  && td:last-child {
    border: 0;
    background: none;
  }
  ${({ $active }) =>
    $active &&
    css`
      && td:not(:last-child) {
        background: #f9d0d2;
        box-shadow: inset 0 0 0 1px #fdeced;
      }
      && th {
        background: #f9d0d2;
        border-color: #a9a9a9;
      }
    `}
`;

const VScroll = styled.div`
  display: flex;
  flex-direction: column;
  align-items: center;
  width: 25px;
  background: #f0f0f0;
  border-left: 1px solid #fff;
  button {
    height: 25px;
  }
  i {
    width: 100%;
    height: 26px;
    margin-bottom: auto;
    background: #cdcdcd;
  }
`;

const OutputTabs = styled.div`
  display: flex;
  align-items: flex-start;
  height: 20px;
  flex: none;
`;

const OutputTab = styled.button`
  display: flex;
  align-items: center;
  gap: 10px;
  height: 19px;
  padding: 0 8px;
  border: 1px solid transparent;
  border-top: 0;
  ${({ $active }) =>
    $active &&
    css`
      height: 20px;
      margin-top: -1px;
      padding: 0 2px 0 9px;
      background: #fff;
      border-color: ${line};
    `}
`;

const rows = [
  ['1.82516', '1.78071', '0.000270824'],
  ['2.06729', '2.76536', '0.00356171'],
  ['3.04012', '1.42638', '0.00765082'],
  ['3.63264', '2.39449', '0.019342'],
  ['3.15881', '1.43426', '0.00750388'],
];

const OutputPanel = () => {
  const [selected, setSelected] = useState(2);
  return (
    <Output>
      <PanelHeader $gap={14} $right={9}>
        <PanelTitle $color={darkRed}>Output</PanelTitle>
        <IconButton aria-label="Output menu">
          <Arrow />
        </IconButton>
        <IconButton aria-label="Pin output">
          <PinIcon />
        </IconButton>
        <IconButton aria-label="Close output">
          <Cross size={12} />
        </IconButton>
      </PanelHeader>
      <OutputBody>
        <Toolbar>
          <IconButton aria-label="Save">
            <SaveIcon size={15} />
          </IconButton>
          <IconButton aria-label="Copy">
            <CopyIcon size={15} />
          </IconButton>
          <IconButton aria-label="Export to Excel">
            <ExcelIcon />
          </IconButton>
          <IconButton aria-label="Add review">
            <AddNoteIcon />
          </IconButton>
          <IconButton aria-label="Run">
            <PlayIcon />
          </IconButton>
          <ToolGroup $gap={11}>
            <PlainButton>Prev</PlainButton>
            <PlainButton>Next</PlainButton>
            <ToolGroup $gap={7}>
              <CheckLabel>
                <Checkbox defaultChecked />
                Fit Select...
              </CheckLabel>
              <CheckLabel>
                <Checkbox defaultChecked />
                Show Errors
              </CheckLabel>
            </ToolGroup>
          </ToolGroup>
        </Toolbar>
        <TableBox>
          <TableView>
            <Table>
              <colgroup>
                <col width="30" />
                <col width="30" />
                <col width="400" />
                <col width="200" />
                <col width="200" />
                <col width="200" />
                <col />
              </colgroup>
              <thead>
                <tr>
                  <th>
                    <Corner />
                  </th>
                  <th>#</th>
                  <th>Layer Name</th>
                  <th>PositionX</th>
                  <th>PositionY</th>
                  <th>Difference Area</th>
                  <th />
                </tr>
              </thead>
              <tbody>
                {rows.map((row, i) => (
                  <Row key={i} $odd={i % 2 === 0} $active={i === selected} onClick={() => setSelected(i)}>
                    <th>{i + 1}</th>
                    <td>1</td>
                    <td>art001.pho</td>
                    {row.map((value) => (
                      <td key={value}>{value}</td>
                    ))}
                    <td />
                  </Row>
                ))}
              </tbody>
            </Table>
          </TableView>
          <VScroll>
            <button aria-label="Scroll up">
              <Chevron dir={0} />
            </button>
            <i />
            <button aria-label="Scroll down">
              <Chevron dir={180} />
            </button>
          </VScroll>
        </TableBox>
      </OutputBody>
      <OutputTabs>
        <OutputTab>Transcript</OutputTab>
        <OutputTab $active>
          PCB Compare
          <Cross size={12} />
        </OutputTab>
      </OutputTabs>
    </Output>
  );
};

/* ---------- browser ---------- */

const Browser = styled.section`
  display: flex;
  flex-direction: column;
  flex: none;
  width: 394px;
  margin-left: 3px;
  border-left: 3px solid ${softLine};
`;

const BrowserBody = styled.div`
  flex: 1;
  min-height: 0;
  display: flex;
  gap: 3px;
`;

const Tree = styled.ul`
  width: 154px;
  margin: 0;
  padding: 4px 0 0 6px;
  list-style: none;
  background: #fff;
  border: 2px solid ${softLine};
  border-left-width: 1px;
  border-bottom: 4px solid #f0f0f0;
`;

const TreeRow = styled.li`
  display: flex;
  align-items: center;
  height: 16px;
`;

const TreeLabel = styled.span`
  margin-left: ${({ $child }) => ($child ? 4 : 3)}px;
  padding: 0 2px;
  line-height: 16px;
  font-weight: ${({ $active }) => ($active ? 700 : 400)};
  background: ${({ $active }) => ($active ? '#e4e4e4' : 'none')};
`;

const Guide = ({ w, d }) => (
  <Icon w={w} h={16} strokeWidth="1" stroke={grey} strokeDasharray="1 1" shapeRendering="crispEdges">
    <path d={d} />
  </Icon>
);

const ExpandBox = () => (
  <IconButton aria-label="Collapse">
    <Icon w={18} h={16} strokeWidth="1" stroke="#8c8c8c" shapeRendering="crispEdges">
      <path d="M.5 1.500H12.500V13.500H.5Z" fill="#f4f4f4" />
      <path d="M2.500 7.500H11" stroke="#3f5f9f" />
      <path d="M14 7.500H18" strokeDasharray="1 1" />
    </Icon>
  </IconButton>
);

const boards = ['01_gerber_v01', '02_gerber_v02'];
const artFiles = ['1:art001.pho', '2:art002.pho', '3:art003.pho', '4:art004.pho'];

const ProjectTree = () => (
  <Tree>
    {boards.map((board, b) => (
      <React.Fragment key={board}>
        <TreeRow>
          <ExpandBox />
          <BoardIcon size={14} />
          <TreeLabel $active={b === 0}>{board}</TreeLabel>
        </TreeRow>
        {artFiles.map((file, i) => (
          <TreeRow key={file}>
            <Guide w={18} d="M6.500 0V16" />
            <Guide w={19} d={i === artFiles.length - 1 ? 'M7.500 0V8M8 8.500H19' : 'M7.500 0V16M8 8.500H19'} />
            <ArtIcon />
            <TreeLabel $child>{file}</TreeLabel>
          </TreeRow>
        ))}
      </React.Fragment>
    ))}
    <TreeRow>
      <Guide w={17} d="M6.500 0V8M7 8.500H17" />
      <SmallFolderIcon />
      <TreeLabel>Attachments</TreeLabel>
    </TreeRow>
  </Tree>
);

const Parts = styled.div`
  flex: 1;
  min-width: 0;
  display: flex;
  flex-direction: column;
  padding: 3px 1px 0 0;
  border: solid ${softLine};
  border-width: 1px 0 0 1px;
`;

const PartsTabs = styled.div`
  display: flex;
  align-items: flex-end;
  height: 19px;
  margin-left: 1px;
`;

const PartsTab = styled.button`
  width: ${({ $width = 70 }) => $width}px;
  height: 19px;
  ${({ $active }) =>
    $active &&
    css`
      height: 20px;
      margin-bottom: -1px;
      z-index: 1;
      background: #fff;
      border: 1px solid ${line};
      border-bottom: 0;
    `}
`;

const PartsBody = styled.div`
  flex: 1;
  min-height: 0;
  display: flex;
  flex-direction: column;
  margin: 0 0 1px 1px;
  padding: 1px 2px 3px;
  background: #fff;
  border: 1px solid ${line};
`;

const PartsBox = styled.div`
  flex: 1;
  min-height: 0;
  display: flex;
  flex-direction: column;
  justify-content: space-between;
  padding: 1px;
  background: #fafafa;
  border: 1px solid ${line};
`;

const PartsTable = styled(Table)`
  td,
  tbody th {
    height: 25px;
  }
  td {
    background: #fff;
  }
  tbody th svg {
    margin: 0 auto;
  }
`;

const FilterCell = styled.div`
  display: flex;
  align-items: center;
  input {
    flex: 1;
    min-width: 0;
    width: 0;
    padding: 0 2px;
    border: 0;
    outline: 0;
    font-size: 11px;
    color: ${grey};
    background: none;
  }
`;

const HScroll = styled.div`
  display: flex;
  align-items: center;
  height: 25px;
  flex: none;
  padding: 0 8px;
  background: #f0f0f0;
  border-top: 1px solid #fff;
  i {
    width: 138px;
    height: 24px;
    margin: 0 auto 0 7px;
    background: #cdcdcd;
  }
`;

const BrowserPanel = () => (
  <Browser>
    <PanelHeader $gap={15} $right={8}>
      <PanelTitle $size={25}>Browser</PanelTitle>
      <IconButton aria-label="Browser menu">
        <Arrow />
      </IconButton>
      <IconButton aria-label="Close browser">
        <Cross size={12} />
      </IconButton>
    </PanelHeader>
    <BrowserBody>
      <ProjectTree />
      <Parts>
        <PartsTabs>
          <PartsTab $active $width={73}>
            Parts
          </PartsTab>
          <PartsTab $width={73}>Nets</PartsTab>
          <PartsTab>Libs</PartsTab>
        </PartsTabs>
        <PartsBody>
          <Toolbar $height={32} $left={8}>
            <IconButton aria-label="Save">
              <SaveIcon size={15} />
            </IconButton>
            <IconButton aria-label="Copy">
              <CopyIcon size={15} />
            </IconButton>
            <IconButton aria-label="Properties">
              <InfoIcon />
            </IconButton>
            <IconButton aria-label="Colors">
              <TilesIcon size={14} />
            </IconButton>
            <IconButton aria-label="Columns">
              <TableIcon />
            </IconButton>
            <CheckLabel>
              <Checkbox defaultChecked />
              Fit Selected
            </CheckLabel>
          </Toolbar>
          <PartsBox>
            <PartsTable>
              <colgroup>
                <col width="30" />
                <col width="50" />
                <col width="100" />
                <col width="35" />
                <col />
              </colgroup>
              <thead>
                <tr>
                  <th>
                    <Corner />
                  </th>
                  <th>Ref.Des</th>
                  <th>Part</th>
                  <th>Pins</th>
                  <th />
                </tr>
              </thead>
              <tbody>
                <tr>
                  <th>
                    <SearchBlueIcon size={14} />
                  </th>
                  <td>
                    <FilterCell>
                      <input aria-label="Filter by Ref.Des" defaultValue="<." />
                      <SearchBlueIcon />
                    </FilterCell>
                  </td>
                  <td>
                    <FilterCell>
                      <input aria-label="Filter by part" defaultValue="<all>" />
                      <SearchBlueIcon />
                    </FilterCell>
                  </td>
                  <td />
                  <td />
                </tr>
              </tbody>
            </PartsTable>
            <HScroll>
              <button aria-label="Scroll left">
                <Chevron dir={-90} />
              </button>
              <i />
              <button aria-label="Scroll right">
                <Chevron dir={90} />
              </button>
            </HScroll>
          </PartsBox>
        </PartsBody>
      </Parts>
    </BrowserBody>
  </Browser>
);

/* ---------- side bar ---------- */

const SideBar = styled.nav`
  width: 60px;
  flex: none;
  background: #3c3c3c;
`;

const SideButton = styled.button`
  display: flex;
  flex-direction: column;
  align-items: center;
  justify-content: center;
  gap: 7px;
  width: 60px;
  height: 60px;
  font: 700 11px 'DejaVu Sans Condensed', 'DejaVu Sans', sans-serif;
  color: ${({ $active }) => ($active ? '#fff' : '#d4d4d4')};
  background: ${({ $active }) => ($active ? '#f00000' : 'none')};
`;

const sideItems = [
  { label: 'Home', art: <path d="M1 11.500L12 1.500L23 11.500L21.500 13L20 12V22H14.500V15H9.500V22H4V12L2.500 13Z" /> },
  {
    label: 'Browser',
    active: true,
    art: (
      <>
        <circle cx="12" cy="12" r="10.500" />
        <path d="M8.500 6L17 14H13L10 17Z" fill="#fff" stroke="none" />
      </>
    ),
  },
  {
    label: 'Find',
    art: (
      <>
        <circle cx="10" cy="10" r="8" />
        <path d="M16 16L22.500 22.500" />
      </>
    ),
  },
  {
    label: 'Layer',
    art: (
      <>
        <path d="M12 2L23 7.500L12 13L1 7.500Z" />
        <path d="M1.500 11L12 16.500L22.500 11M1.500 14.500L12 20L22.500 14.500" />
      </>
    ),
  },
  {
    label: 'Review',
    art: (
      <>
        <path d="M7 17.500C-2 14 .5 2.500 12 2.500C25 2.500 26 17.500 12 17.500L5 22Z" />
        <path d="M9 9.500V14M12 6.500V14M15 8.500V14" strokeWidth="2.400" />
      </>
    ),
  },
];

/* ---------- status bar ---------- */

const StatusBar = styled.footer`
  display: flex;
  align-items: center;
  flex: none;
  height: 36px;
  padding: 0 9px 0 4px;
  color: #fff;
  background: ${red};
`;

const StatusItem = styled.span`
  display: flex;
  align-items: center;
  gap: 6px;
  width: ${({ $width }) => ($width ? `${$width}px` : 'auto')};
  flex: ${({ $grow }) => ($grow ? 1 : 'none')};
`;

const menu = ['HOME', 'EDIT', 'REPORT', 'TOOLS', 'LIBRARY', 'REVIEW', 'VIEW', 'SETUP', 'HELP'];

const App = () => (
  <Window>
    <GlobalStyle />
    <Frame>
      <TitleBar>
        <QuickBar>
          <LogoIcon />
          <IconButton aria-label="Open" $gap={8}>
            <FolderIcon />
            <Arrow w={7} h={4} />
          </IconButton>
          <IconButton aria-label="Save" $gap={8}>
            <SaveIcon />
            <Arrow w={7} h={4} />
          </IconButton>
          <IconButton aria-label="Undo">
            <UndoIcon />
          </IconButton>
          <IconButton aria-label="Redo">
            <UndoIcon flip />
          </IconButton>
          <IconButton aria-label="Customize toolbar">
            <CustomizeIcon />
          </IconButton>
        </QuickBar>
        <WindowTitle>Untitled [01_gerber_v01] - interCAD Editor</WindowTitle>
        <WindowButtons>
          <IconButton aria-label="Minimize">
            <Icon w={9} h={12} stroke="none">
              <path d="M0 8H9V11H0Z" fill="#6f6f6f" />
            </Icon>
          </IconButton>
          <IconButton aria-label="Maximize">
            <Icon w={13} stroke="#6f6f6f" strokeWidth="1">
              <path d="M.5 .5H12.500V12.500H.5ZM0 1.500H13M0 2.500H13" />
            </Icon>
          </IconButton>
          <IconButton aria-label="Close">
            <Cross size={12} />
          </IconButton>
        </WindowButtons>
      </TitleBar>
      <MenuBar>
        <FileButton>FILE</FileButton>
        {menu.map((item) => (
          <MenuTab key={item} $active={item === 'HOME'}>
            {item}
          </MenuTab>
        ))}
        <MenuRight>
          <IconButton aria-label="Collapse ribbon">
            <Icon w={11} h={8} stroke={grey} strokeWidth="2">
              <path d="M1 7L5.500 2L10 7" />
            </Icon>
          </IconButton>
          <IconButton aria-label="Link" $gap={9}>
            <LinkIcon />
            <Arrow w={7} h={4} />
          </IconButton>
          <IconButton aria-label="Help">
            <HelpIcon />
          </IconButton>
        </MenuRight>
      </MenuBar>
      <RibbonBar />
      <Main>
        <LeftColumn>
          <Documents>
            <DocumentPane name="01_gerber_v01" share={797} pad={{ x: 107, y: 217 }} trace="M342.500 393.500H713.500" />
            <DocumentPane name="02_gerber_v02" share={805} shift={5} pad={{ x: 204, y: 289 }} trace="M438.500 465L714 393.500" />
          </Documents>
          <Splitter />
          <OutputPanel />
        </LeftColumn>
        <BrowserPanel />
        <SideBar>
          {sideItems.map(({ label, active, art }) => (
            <SideButton key={label} $active={active}>
              <Icon w={24} stroke="#fff" strokeWidth="1.800">
                {art}
              </Icon>
              {label}
            </SideButton>
          ))}
        </SideBar>
      </Main>
    </Frame>
    <StatusBar>
      <StatusItem $grow>Ready</StatusItem>
      <StatusItem $width={176}>
        <Icon w={18} h={20} stroke="#fff" strokeWidth="1.200">
          <path d="M9 1L17 5.500L9 10L1 5.500Z" />
          <path d="M1 6V14.500L9 19L17 14.500V6L9 10.500Z" fill="#fff" fillOpacity=".7" />
          <path d="M1 9.500L9 14L17 9.500M1 12.500L9 17L17 12.500" stroke={red} strokeWidth=".8" />
        </Icon>
        art001.pho
      </StatusItem>
      <StatusItem $width={148}>
        <Icon w={16} stroke="#fff" strokeWidth="1.300">
          <path d="M3.500 0V16M8 0V16M12.500 0V16M0 3.500H16M0 8H16M0 12.500H16" />
        </Icon>
        Grid: 0.01, 0.01
      </StatusItem>
      <StatusItem $width={175}>Abs: 2.97, 1.5</StatusItem>
      <StatusItem $width={56}>INCH</StatusItem>
      <StatusItem $width={31}>
        <Icon w={17} stroke="#fff" strokeWidth="1.300">
          <path d="M1 1H16V16H1Z" fill="#fff" fillOpacity=".25" />
          <path d="M3.500 5.500V3.500H5.500M11.500 3.500H13.500V5.500M3.500 11.500V13.500H5.500M11.500 13.500H13.500V11.500M6 6L11 11M11 6L6 11" />
        </Icon>
      </StatusItem>
      <StatusItem>
        <Icon w={11} h={22} stroke="none" fill="#e9b6b6">
          <path d="M8 10H11V13H8ZM8 14H11V17H8ZM4 14H7V17H4ZM8 18H11V21H8ZM4 18H7V21H4ZM0 18H3V21H0Z" />
        </Icon>
      </StatusItem>
    </StatusBar>
  </Window>
);

export default App;
